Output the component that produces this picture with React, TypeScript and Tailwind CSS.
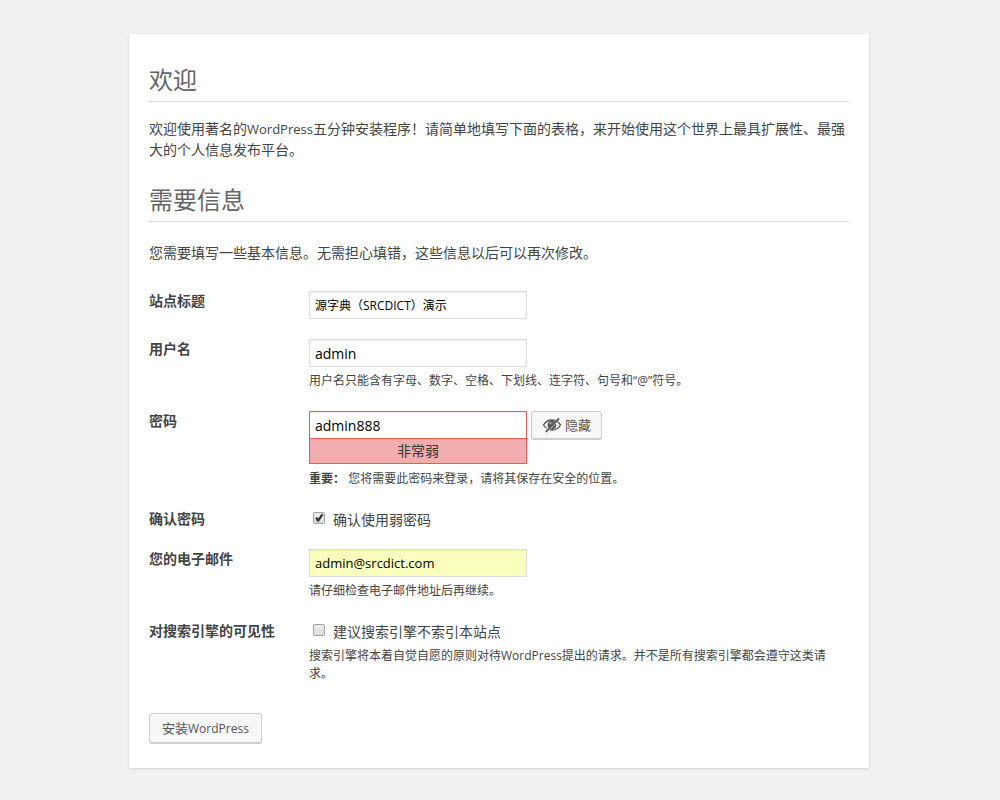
import { useState } from "react";
import type { ReactNode } from "react";

const fieldClass =
  "block h-7 w-[218px] border px-[5px] text-black outline-none shadow-[inset_0_1px_2px_rgba(0,0,0,0.07)]";

const buttonClass =
  "rounded-[3px] border border-[#ccc] bg-[#f7f7f7] text-[#555] shadow-[0_1px_0_#ccc] hover:bg-[#fafafa]";

function Heading({ children, level }: { children: ReactNode; level: 1 | 2 }) {
  const Tag = level === 1 ? "h1" : "h2";
  return (
    <Tag className="border-b border-[#dadada] pb-[3px] text-2xl/9 font-normal text-[#666]">
      {children}
    </Tag>
  );
}

function Row({ label, htmlFor, children }: { label: string; htmlFor: string; children: ReactNode }) {
  return (
    <div className="flex flex-col py-[10px] sm:flex-row">
      <label htmlFor={htmlFor} className="w-40 shrink-0 leading-[19px] font-bold">
        {label}
      </label>
      <div className="min-w-0 flex-1 sm:pr-5">{children}</div>
    </div>
  );
}

function Hint({ children }: { children: ReactNode }) {
  return <p className="mt-[5px] pb-px text-xs/[18px]">{children}</p>;
}

function Check({
  id,
  label,
  defaultChecked = false,
}: {
  id: string;
  label: string;
  defaultChecked?: boolean;
}) {
  const [checked, setChecked] = useState(defaultChecked);
  return (
    <div className="flex h-5 items-start pl-1">
      <span className="mt-[3px] grid size-3">
        <input
          id={id}
          type="checkbox"
          checked={checked}
          onChange={(e) => setChecked(e.target.checked)}
          className="col-start-1 row-start-1 size-3 appearance-none rounded-[2px] border border-[#a0a0a0] bg-linear-to-b from-[#eee] to-[#dcdcdc]"
        />
        {checked && (
          <svg viewBox="0 0 12 12" className="pointer-events-none col-start-1 row-start-1 size-3" aria-hidden="true">
            <path d="M2.2 6 4 5.1 5.2 6.600 8.600 1.800 10.400 2.700 5.800 9.800 4.200 9.800Z" fill="#333" />
          </svg>
        )}
      </span>
      <label htmlFor={id} className="pl-2">
        {label}
      </label>
    </div>
  );
}

function HiddenEye() {
  return (
    <svg viewBox="0 0 20 20" className="size-5" fill="none" stroke="#555" aria-hidden="true">
      <path d="M13.200 5.500C12.200 5.100 11.100 5 10 5 6.500 5 3.200 7 1.500 10c.8 1.300 1.900 2.500 3.200 3.300" strokeWidth="1.300" />
      <path d="M15.500 6.700c1.200.8 2.300 1.900 3 3.300-1.700 3-5 5-8.500 5-.8 0-1.500-.1-2.200-.3" strokeWidth="1.300" />
      <path d="M12.600 6.200 6.900 13c-1-.9-1.500-2-1.400-3.300C5.600 7.500 7.500 5.600 9.800 5.500c1 0 2 .2 2.800.7Z" fill="#555" stroke="none" />
      <path d="m14 8.500-5.500 5.800c2.600.6 5.300-.9 5.700-3.400.1-.8.100-1.600-.2-2.400Z" fill="#555" stroke="none" />
      <path d="M17 3.500 3.800 16.800" strokeWidth="1.900" />
      <path d="M9.500 7.400c-.9.100-1.600.8-1.800 1.600" stroke="#f7f7f7" strokeWidth="0.900" />
    </svg>
  );
}

export default function App() {
  const [visible, setVisible] = useState(true);

  return (
    <div className="min-h-screen bg-[#f1f1f1] px-4 pt-[34px] pb-8 font-['Open_Sans','Noto_Sans_CJK_SC',sans-serif] text-sm/[21px] text-[#444]">
      <main
        lang="zh-CN"
        className="mx-auto max-w-[740px] bg-white px-5 pt-7 pb-[25px] shadow-[0_1px_3px_rgba(0,0,0,0.13)] sm:relative sm:-left-px"
      >
        <Heading level={1}>欢迎</Heading>
        <p className="mt-4 mb-[22px]">
          欢迎使用著名的<span className="text-[13px] leading-none">WordPress</span>五分钟安装程序！请简单地填写下面的表格，来开始使用这个世界上最具扩展性、最强大的个人信息发布平台。
        </p>
        <Heading level={2}>需要信息</Heading>
        <p className="mt-5 mb-[18px]">您需要填写一些基本信息。无需担心填错，这些信息以后可以再次修改。</p>

        <form onSubmit={(e) => e.preventDefault()}>
          <Row label="站点标题" htmlFor="title">
            <input
              id="title"
              type="text"
              defaultValue="源字典（SRCDICT）演示"
              className={`${fieldClass} border-[#ddd] bg-white text-xs`}
            />
          </Row>
          <Row label="用户名" htmlFor="user">
            <input
              id="user"
              type="text"
              defaultValue="admin"
              className={`${fieldClass} border-[#ddd] bg-white text-sm`}
            />
            <Hint>用户名只能含有字母、数字、空格、下划线、连字符、句号和“@”符号。</Hint>
          </Row>
          <Row label="密码" htmlFor="password">
            <div className="flex items-start gap-1 pb-px">
              <div className="w-[218px]">
                <input
                  id="password"
                  type={visible ? "text" : "password"}
                  defaultValue="admin888"
                  className={`${fieldClass} border-[#e35b5b] bg-white text-sm`}
                />
                <div className="-mt-px border border-[#e35b5b] bg-[#f1adad] py-[2px] text-center leading-5 text-[#32373c]">
                  非常弱
                </div>
              </div>
              <button
                type="button"
                onClick={() => setVisible(!visible)}
                className={`${buttonClass} flex h-7 items-center gap-[3px] px-[10px] text-[13px]`}
              >
                <HiddenEye />
                <span>{visible ? "隐藏" : "显示"}</span>
              </button>
            </div>
            <Hint>
              <strong>重要：</strong> 您将需要此密码来登录，请将其保存在安全的位置。
            </Hint>
          </Row>
          <Row label="确认密码" htmlFor="weak">
            <Check id="weak" label="确认使用弱密码" defaultChecked />
          </Row>
          <Row label="您的电子邮件" htmlFor="email">
            <input
              id="email"
              type="email"
              defaultValue="admin@srcdict.com"
              className={`${fieldClass} border-[#ddd] bg-[#faffbd] text-[13px]`}
            />
            <Hint>请仔细检查电子邮件地址后再继续。</Hint>
          </Row>
          <Row label="对搜索引擎的可见性" htmlFor="visibility">
            <div className="pb-px">
              <Check id="visibility" label="建议搜索引擎不索引本站点" />
            </div>
            <Hint>
              搜索引擎将本着自觉自愿的原则对待WordPress提出的请求。并不是所有搜索引擎都会遵守这类请求。
            </Hint>
          </Row>
          <button type="submit" className={`${buttonClass} mt-[19px] block h-[30px] px-3 text-[13px]`}>
            安装<span className="text-xs">WordPress</span>
          </button>
        </form>
      </main>
    </div>
  );
}
